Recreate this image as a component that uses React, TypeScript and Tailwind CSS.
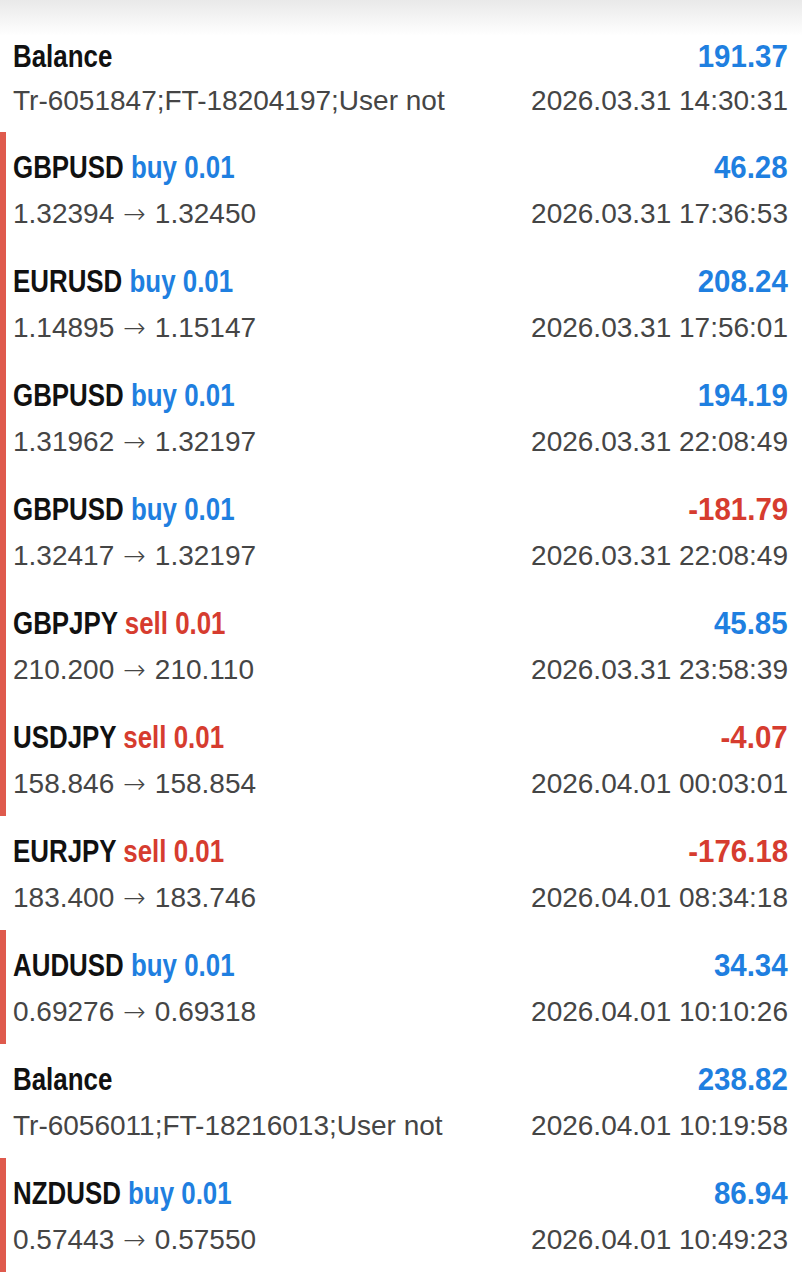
import React from "react";

type Row = {
  title: string;
  side?: "buy" | "sell";
  from?: string;
  to?: string;
  note?: string;
  time: string;
  value: string;
  bar?: boolean;
};

const rows: Row[] = [
  { title: "Balance", note: "Tr-6051847;FT-18204197;User not", time: "2026.03.31 14:30:31", value: "191.37" },
  { title: "GBPUSD", side: "buy", from: "1.32394", to: "1.32450", time: "2026.03.31 17:36:53", value: "46.28", bar: true },
  { title: "EURUSD", side: "buy", from: "1.14895", to: "1.15147", time: "2026.03.31 17:56:01", value: "208.24", bar: true },
  { title: "GBPUSD", side: "buy", from: "1.31962", to: "1.32197", time: "2026.03.31 22:08:49", value: "194.19", bar: true },
  { title: "GBPUSD", side: "buy", from: "1.32417", to: "1.32197", time: "2026.03.31 22:08:49", value: "-181.79", bar: true },
  { title: "GBPJPY", side: "sell", from: "210.200", to: "210.110", time: "2026.03.31 23:58:39", value: "45.85", bar: true },
  { title: "USDJPY", side: "sell", from: "158.846", to: "158.854", time: "2026.04.01 00:03:01", value: "-4.07", bar: true },
  { title: "EURJPY", side: "sell", from: "183.400", to: "183.746", time: "2026.04.01 08:34:18", value: "-176.18" },
  { title: "AUDUSD", side: "buy", from: "0.69276", to: "0.69318", time: "2026.04.01 10:10:26", value: "34.34", bar: true },
  { title: "Balance", note: "Tr-6056011;FT-18216013;User not", time: "2026.04.01 10:19:58", value: "238.82" },
  { title: "NZDUSD", side: "buy", from: "0.57443", to: "0.57550", time: "2026.04.01 10:49:23", value: "86.94", bar: true },
];

function TradeRow({ row, first }: { row: Row; first: boolean }) {
  const negative = row.value.startsWith("-");
  return (
    <div className="flex h-[114px]">
      <div className={row.bar ? "w-[6px] shrink-0 bg-[#df5a4d]" : "w-[6px] shrink-0"} />
      <div className={`flex-1 pl-[7px] pr-[14px] ${first ? "pt-[22px]" : "pt-[19px]"}`}>
        {/* condensed bold headline: no condensed face installed, so squeeze it */}
        <div className="flex justify-between h-[34px] leading-[34px] text-[31px] font-bold font-['Liberation_Sans']">
          <div className="inline-block whitespace-nowrap origin-left scale-x-[0.835] text-[#111]">
            {row.title}
            {row.side && (
              <span className={row.side === "buy" ? "text-[#1f7fe0]" : "text-[#d63c2f]"}>
                {" "}
                {row.side} 0.01
              </span>
            )}
          </div>
          <div className={`inline-block origin-right scale-x-[0.95] ${negative ? "text-[#d63c2f]" : "text-[#1f7fe0]"}`}>
            {row.value}
          </div>
        </div>
        <div
          className={`flex justify-between leading-[32px] text-[28px] text-[#454545] font-['Liberation_Sans'] ${
            first ? "mt-[11px]" : "mt-[13px]"
          }`}
        >
          {row.note ? (
            <span>{row.note}</span>
          ) : (
            <span className="flex items-baseline">
              {row.from}
              <span className="mx-[9px] font-['DejaVu_Sans'] font-extralight text-[27px]">→</span>
              {row.to}
            </span>
          )}
          <span>{row.time}</span>
        </div>
      </div>
    </div>
  );
}

export default function App() {
  return (
    <div className="w-[802px] h-[1280px] overflow-hidden bg-[linear-gradient(to_bottom,#e9e9e9,#ffffff_36px)]">
      <div className="pt-[18px]">
        {rows.map((r, i) => (
          <TradeRow key={i} row={r} first={i === 0} />
        ))}
      </div>
    </div>
  );
}
